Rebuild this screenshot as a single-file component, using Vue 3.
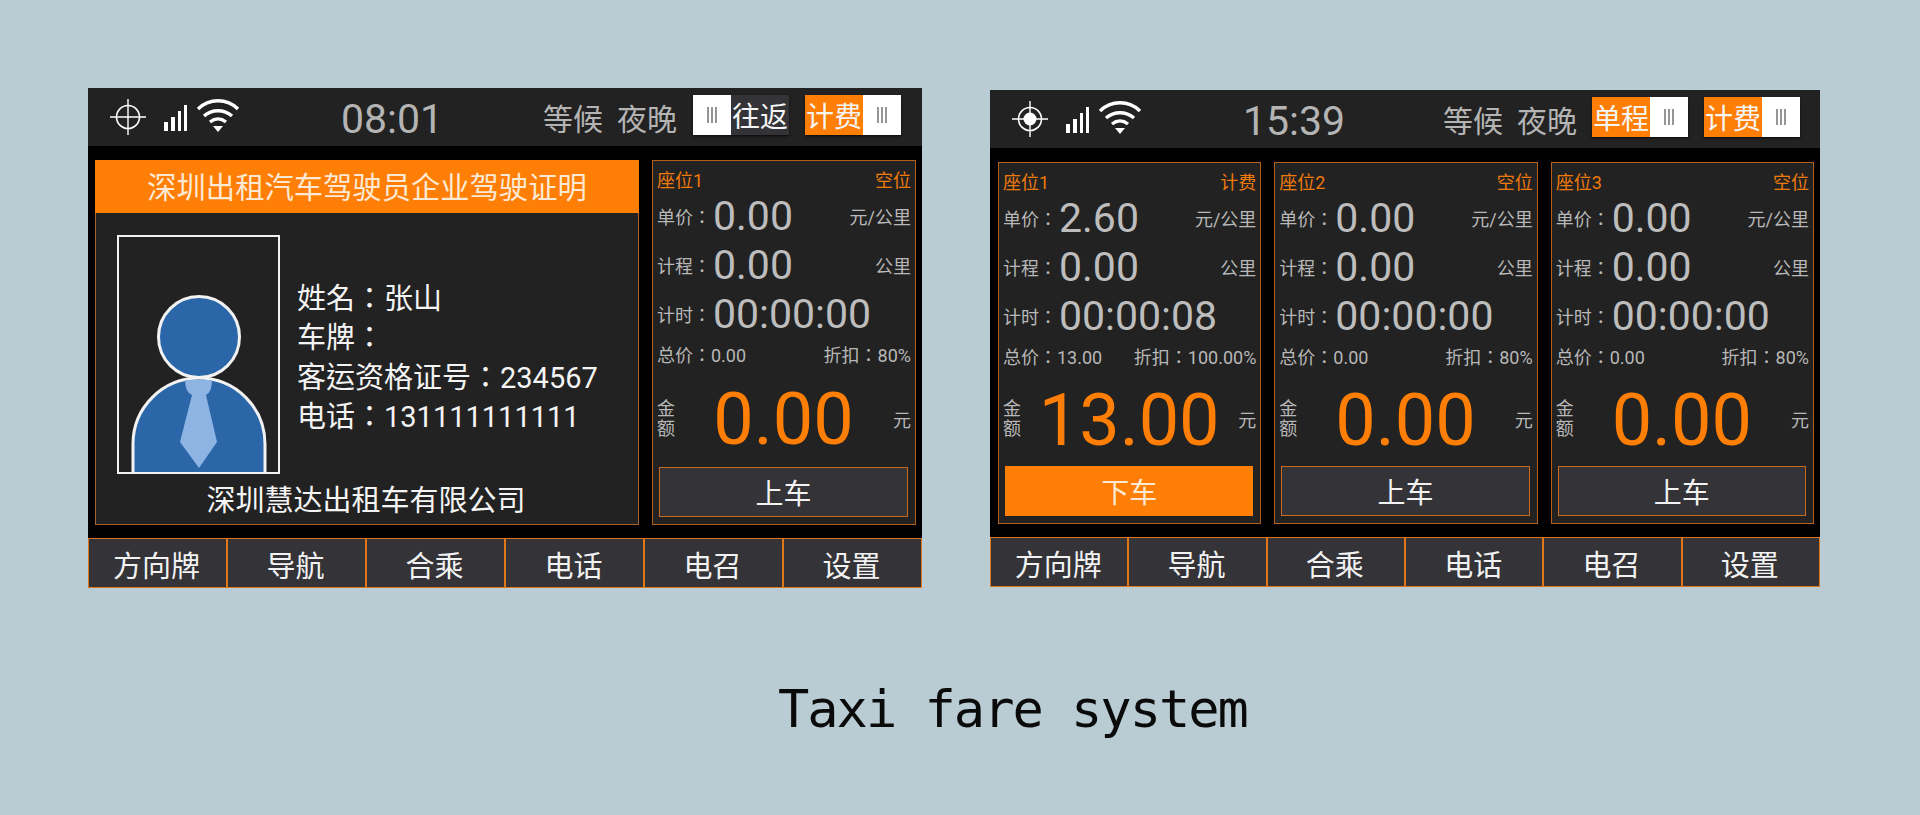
<template>
  <div class="page">
    <div class="devices">
      <section class="device device-left">
        <header class="topbar">
          <svg class="locate" viewBox="0 0 38 38" width="38" height="38">
            <circle cx="19" cy="19" r="11.5" fill="none" stroke="#fff" stroke-width="1.6" />
            <path d="M19 1v36M1 19h36" stroke="#fff" stroke-width="1.4" />
          </svg>
          <svg class="signal" viewBox="0 0 28 28" width="28" height="28">
            <path d="M3 18h4v9H3zM10 13h4v14h-4zM17 7h3v20h-3zM23 1h3v26h-3z" fill="#fff" />
          </svg>
          <svg class="wifi" viewBox="0 0 44 36" width="44" height="36">
            <path d="M2 12C13 1 31 1 42 12M8 19c8-7 20-7 28 0M14 25c5-4 11-4 16 0" fill="none" stroke="#fff" stroke-width="3.4" />
            <path d="M17 29h10l-5 6z" fill="#fff" />
          </svg>
          <div class="clock">08:01</div>
          <div class="status">等候</div>
          <div class="status">夜晚</div>
          <div class="toggle off">
            <span class="knob"><i></i></span>
            <span class="toggle-text">往返</span>
          </div>
          <div class="toggle on second">
            <span class="toggle-text">计费</span>
            <span class="knob"><i></i></span>
          </div>
        </header>
        <main class="content">
          <div class="license">
            <div class="license-title">深圳出租汽车驾驶员企业驾驶证明</div>
            <div class="license-body">
              <div class="photo">
                <svg viewBox="0 0 159 235" width="159" height="235">
                  <path d="M14 237v-30a66 66 0 0 1 132 0v30z" fill="#2a66a8" stroke="#f2f2f2" stroke-width="3" />
                  <circle cx="80" cy="100" r="40.5" fill="#2a66a8" stroke="#f2f2f2" stroke-width="3" />
                  <path d="M66 143h27q0 12-6 15l11 47-18 26-19-26 12-47q-7-3-7-15z" fill="#8db4e2" />
                </svg>
              </div>
              <div class="driver">
                <div>姓名：张山</div>
                <div>车牌：</div>
                <div>客运资格证号：234567</div>
                <div>电话：131111111111</div>
              </div>
            </div>
            <div class="company">深圳慧达出租车有限公司</div>
          </div>
          <div class="seat" v-for="seat in leftSeats" :key="seat.name">
            <div class="seat-head"><span>{{ seat.name }}</span><span>{{ seat.state }}</span></div>
            <div class="row"><span class="lbl">单价：</span><span class="val">{{ seat.price }}</span><span class="unit">元/公里</span></div>
            <div class="row"><span class="lbl">计程：</span><span class="val">{{ seat.dist }}</span><span class="unit">公里</span></div>
            <div class="row"><span class="lbl">计时：</span><span class="val">{{ seat.time }}</span></div>
            <div class="totals"><span>总价：{{ seat.total }}</span><span>折扣：{{ seat.discount }}</span></div>
            <div class="amount">
              <span class="amount-lbl">金<br />额</span>
              <span class="amount-val">{{ seat.amount }}</span>
              <span class="unit">元</span>
            </div>
            <button class="seat-btn" :class="{ active: seat.active }">{{ seat.action }}</button>
          </div>
        </main>
        <nav class="nav">
          <div class="nav-item" v-for="item in navItems" :key="item">{{ item }}</div>
        </nav>
      </section>

      <section class="device device-right">
        <header class="topbar">
          <svg class="locate" viewBox="0 0 38 38" width="38" height="38">
            <circle cx="19" cy="19" r="11.5" fill="none" stroke="#fff" stroke-width="1.6" />
            <circle cx="19" cy="19" r="6.5" fill="#fff" />
            <path d="M19 1v36M1 19h36" stroke="#fff" stroke-width="1.4" />
          </svg>
          <svg class="signal" viewBox="0 0 28 28" width="28" height="28">
            <path d="M3 18h4v9H3zM10 13h4v14h-4zM17 7h3v20h-3zM23 1h3v26h-3z" fill="#fff" />
          </svg>
          <svg class="wifi" viewBox="0 0 44 36" width="44" height="36">
            <path d="M2 12C13 1 31 1 42 12M8 19c8-7 20-7 28 0M14 25c5-4 11-4 16 0" fill="none" stroke="#fff" stroke-width="3.4" />
            <path d="M17 29h10l-5 6z" fill="#fff" />
          </svg>
          <div class="clock">15:39</div>
          <div class="status">等候</div>
          <div class="status">夜晚</div>
          <div class="toggle on">
            <span class="toggle-text">单程</span>
            <span class="knob"><i></i></span>
          </div>
          <div class="toggle on second">
            <span class="toggle-text">计费</span>
            <span class="knob"><i></i></span>
          </div>
        </header>
        <main class="content">
          <div class="seat" v-for="seat in rightSeats" :key="seat.name">
            <div class="seat-head"><span>{{ seat.name }}</span><span>{{ seat.state }}</span></div>
            <div class="row"><span class="lbl">单价：</span><span class="val">{{ seat.price }}</span><span class="unit">元/公里</span></div>
            <div class="row"><span class="lbl">计程：</span><span class="val">{{ seat.dist }}</span><span class="unit">公里</span></div>
            <div class="row"><span class="lbl">计时：</span><span class="val">{{ seat.time }}</span></div>
            <div class="totals"><span>总价：{{ seat.total }}</span><span>折扣：{{ seat.discount }}</span></div>
            <div class="amount">
              <span class="amount-lbl">金<br />额</span>
              <span class="amount-val">{{ seat.amount }}</span>
              <span class="unit">元</span>
            </div>
            <button class="seat-btn" :class="{ active: seat.active }">{{ seat.action }}</button>
          </div>
        </main>
        <nav class="nav">
          <div class="nav-item" v-for="item in navItems" :key="item">{{ item }}</div>
        </nav>
      </section>
    </div>
    <h1 class="caption">Taxi fare system</h1>
  </div>
</template>

<script setup>
const navItems = ["方向牌", "导航", "合乘", "电话", "电召", "设置"];

function idleSeat(name) {
  return {
    name,
    state: "空位",
    price: "0.00",
    dist: "0.00",
    time: "00:00:00",
    total: "0.00",
    discount: "80%",
    amount: "0.00",
    action: "上车",
    active: false,
  };
}

const leftSeats = [idleSeat("座位1")];

const rightSeats = [
  {
    name: "座位1",
    state: "计费",
    price: "2.60",
    dist: "0.00",
    time: "00:00:08",
    total: "13.00",
    discount: "100.00%",
    amount: "13.00",
    action: "下车",
    active: true,
  },
  idleSeat("座位2"),
  idleSeat("座位3"),
];
</script>

<style>
html,
body {
  margin: 0;
  background: #b9cbd3;
}
</style>

<style scoped>
.page {
  height: 815px;
  overflow: hidden;
  background: #b9cbd3;
  font-family: Roboto, "Noto Sans CJK SC", sans-serif;
  box-sizing: border-box;
  padding: 88px 0 0 88px;
}

.devices {
  display: flex;
  align-items: flex-start;
  gap: 68px;
}

.device {
  display: flex;
  flex-direction: column;
  background: #000;
}

.device-left {
  width: 834px;
  height: 500px;
}

.device-right {
  width: 830px;
  height: 497px;
  margin-top: 2px;
}

.topbar {
  height: 58px;
  flex: none;
  display: flex;
  align-items: center;
  background: #222;
  padding-left: 21px;
  color: #b4b4b4;
}

.locate {
  flex: none;
}

.signal {
  flex: none;
  margin: 2px 0 0 14px;
}

.wifi {
  flex: none;
  margin: -4px 0 0 7px;
}

.clock {
  width: 100px;
  margin: 4px 102px 0 101px;
  font-size: 41px;
  font-weight: 400;
  text-align: center;
  white-space: nowrap;
}

.device-right .clock {
  margin-right: 100px;
}

.status {
  font-size: 30px;
  margin-right: 14px;
  white-space: nowrap;
}

.toggle {
  flex: none;
  display: flex;
  height: 40px;
  width: 96px;
  margin: -4px 0 0 2px;
  overflow: hidden;
  box-shadow: 0 1px 2px rgba(0, 0, 0, 0.7);
}

.device-right .toggle:not(.second) {
  margin-left: 1px;
}

.toggle.second {
  margin-left: 16px;
}

.toggle-text {
  width: 58px;
  height: 40px;
  font-size: 28px;
  line-height: 45px;
  text-align: center;
  color: #f5f5f5;
  white-space: nowrap;
}

.toggle.on .toggle-text {
  background: #ff7e05;
}

.toggle.off .toggle-text {
  background: #333338;
}

.knob {
  width: 38px;
  background: #fff;
  display: flex;
  align-items: center;
  justify-content: center;
}

.knob i {
  width: 10px;
  height: 16px;
  background: repeating-linear-gradient(90deg, #969696 0 2px, #fff 2px 4px);
}

.content {
  flex: 1;
  display: flex;
  gap: 13px;
  padding: 14px 6px 13px 7px;
  min-height: 0;
}

.device-right .content {
  padding-left: 8px;
}

.license {
  width: 544px;
  box-sizing: border-box;
  border: 1px solid #a9622a;
  background: #222;
  display: flex;
  flex-direction: column;
  color: #f4f4f4;
  font-size: 29px;
}

.license-title {
  height: 53px;
  margin: -1px -1px 0;
  background: #ff7e05;
  text-align: center;
  font-size: 29.3px;
  line-height: 56px;
  color: #fbe9d4;
}

.license-body {
  display: flex;
  align-items: center;
  padding: 22px 0 0 21px;
  gap: 17px;
}

.photo {
  width: 159px;
  height: 235px;
  flex: none;
  border: 2px solid #f2f2f2;
  overflow: hidden;
}

.photo svg {
  display: block;
}

.driver {
  font-family: Roboto, "Noto Sans CJK TC", sans-serif;
  line-height: 39.5px;
  margin-top: 8px;
  white-space: nowrap;
}

.company {
  margin-top: 7px;
  text-align: center;
  line-height: 40px;
  padding-right: 2px;
}

.seat {
  flex: 1;
  min-width: 0;
  box-sizing: border-box;
  border: 1px solid #b3601c;
  background: #222;
  padding: 5px 4px 7px 4px;
  display: flex;
  flex-direction: column;
  color: #b8b8b8;
  font-size: 18px;
}

.seat-head {
  display: flex;
  justify-content: space-between;
  color: #ef7a0c;
  line-height: 30px;
  margin-bottom: -6px;
}

.row {
  height: 49px;
  display: flex;
  align-items: center;
  white-space: nowrap;
}

.row:nth-child(2) {
  margin-top: 1px;
}

.lbl {
  width: 56px;
  flex: none;
  padding-top: 1px;
  font-family: Roboto, "Noto Sans CJK TC", sans-serif;
}

.val {
  font-size: 41px;
  font-weight: 400;
  color: #bdbdbd;
  flex: 1;
}

.unit {
  flex: none;
}

.totals {
  display: flex;
  justify-content: space-between;
  height: 32px;
  align-items: center;
  white-space: nowrap;
  font-family: Roboto, "Noto Sans CJK TC", sans-serif;
}

.amount {
  flex: 1;
  display: flex;
  align-items: center;
  min-height: 0;
}

.amount-lbl {
  width: 24px;
  flex: none;
  line-height: 20px;
}

.amount-val {
  flex: 1;
  padding: 3px 7px 0 0;
  text-align: center;
  font-size: 72px;
  line-height: 1;
  color: #ff7e05;
  white-space: nowrap;
}

.seat-btn {
  height: 50px;
  flex: none;
  margin: 0 3px 0 2px;
  box-sizing: border-box;
  border: 1px solid #c9691c;
  background: #333338;
  color: #f2f2f2;
  font-family: inherit;
  font-size: 28px;
  padding: 0;
}

.seat-btn.active {
  background: #ff7e05;
  border-color: #ff7e05;
  color: #fbe9d4;
}

.nav {
  height: 50px;
  flex: none;
  display: grid;
  grid-template-columns: repeat(6, 1fr);
}

.nav-item {
  box-sizing: border-box;
  display: flex;
  align-items: center;
  justify-content: center;
  height: 50px;
  border: 1px solid #e0751a;
  background: #333338;
  color: #f2f2f2;
  font-size: 29px;
  padding: 1px 2px 0 0;
}

.caption {
  margin: 93px 0 0 690px;
  font-family: "DejaVu Sans Mono", "Liberation Mono", monospace;
  font-size: 52px;
  letter-spacing: -2px;
  line-height: 56px;
  font-weight: 400;
  color: #0a0a0a;
  white-space: pre;
}
</style>
